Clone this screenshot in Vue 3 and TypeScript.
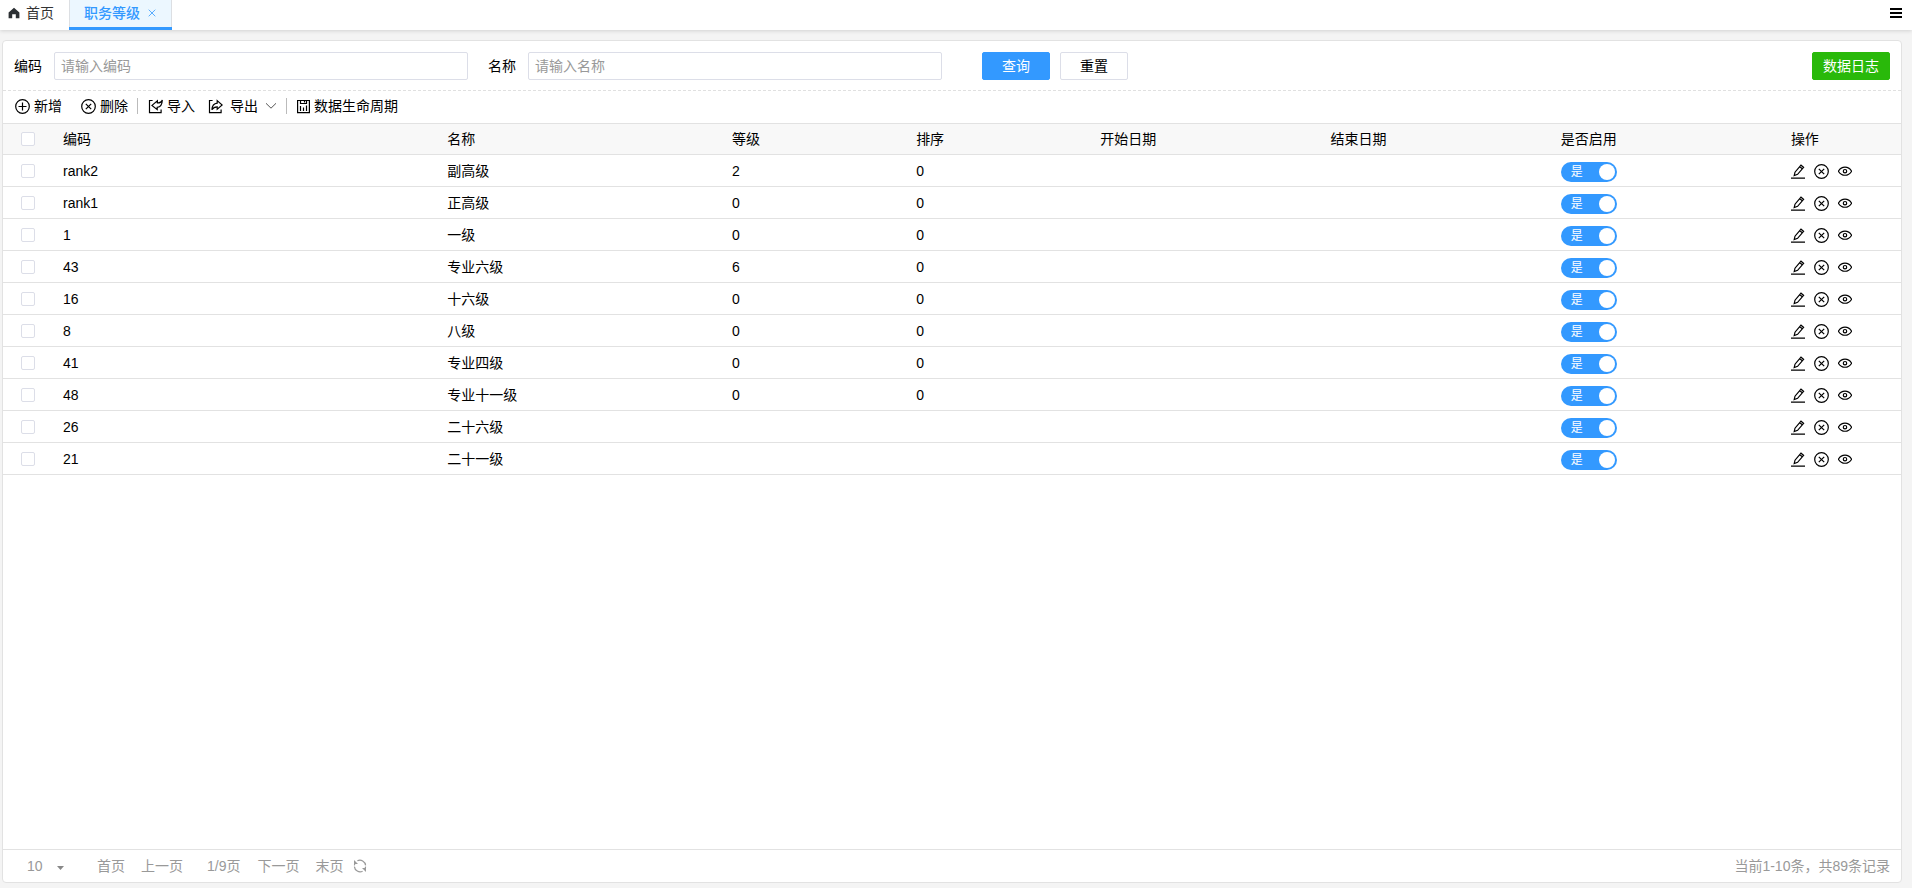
<script setup lang="ts">
import { computed, reactive, ref } from 'vue'

interface Rank {
  code: string
  name: string
  level: string
  sort: string
  start: string
  end: string
  enabled: boolean
  checked: boolean
}

const makeRank = (code: string, name: string, level = '', sort = ''): Rank => ({
  code, name, level, sort, start: '', end: '', enabled: true, checked: false,
})

const rows = reactive<Rank[]>([
  makeRank('rank2', '副高级', '2', '0'),
  makeRank('rank1', '正高级', '0', '0'),
  makeRank('1', '一级', '0', '0'),
  makeRank('43', '专业六级', '6', '0'),
  makeRank('16', '十六级', '0', '0'),
  makeRank('8', '八级', '0', '0'),
  makeRank('41', '专业四级', '0', '0'),
  makeRank('48', '专业十一级', '0', '0'),
  makeRank('26', '二十六级'),
  makeRank('21', '二十一级'),
])

const code = ref('')
const name = ref('')
const pageSize = ref('10')

const allChecked = computed<boolean>({
  get: () => rows.every((r) => r.checked),
  set: (value) => rows.forEach((r) => { r.checked = value }),
})

function reset(): void {
  code.value = ''
  name.value = ''
}
</script>

<template>
  <div class="page">
    <header class="tabs">
      <nav class="tab-list">
        <a class="tab home" href="#home">
          <svg width="12" height="12" viewBox="0 0 12 12"><path d="M6 .8 11.4 5.6V11.3H7.8V7.2H4.2V11.3H.6V5.6Z" fill="#2b2f33" /></svg>
          <span>首页</span>
        </a>
        <div class="tab active">
          <a href="#rank">职务等级</a>
          <button class="close" type="button" aria-label="关闭">
            <svg width="8" height="8" viewBox="0 0 8 8"><path d="M.7 .7 7.3 7.3M7.3 .7.7 7.3" stroke="currentColor" stroke-width=".8" fill="none" /></svg>
          </button>
        </div>
      </nav>
      <button class="menu" type="button" aria-label="菜单">
        <svg width="12" height="10" viewBox="0 0 12 10"><path d="M0 0h12v2H0zM0 4h12v2H0zM0 8h12v2H0z" fill="#000" /></svg>
      </button>
    </header>

    <main class="card">
      <form class="search" @submit.prevent>
        <div class="field">
          <label for="code">编码</label>
          <input id="code" v-model="code" type="text" placeholder="请输入编码" />
        </div>
        <div class="field">
          <label for="name">名称</label>
          <input id="name" v-model="name" type="text" placeholder="请输入名称" />
        </div>
        <div class="actions">
          <button class="btn primary" type="submit">查询</button>
          <button class="btn" type="button" @click="reset">重置</button>
        </div>
        <button class="btn log" type="button">数据日志</button>
      </form>

      <div class="toolbar">
        <button class="tool add" type="button">
          <svg width="15" height="15" viewBox="0 0 15 15"><circle cx="7.5" cy="7.5" r="6.8" /><path d="M7.5 3.5v8M3.5 7.5h8" /></svg>
          <span>新增</span>
        </button>
        <button class="tool" type="button">
          <svg width="15" height="15" viewBox="0 0 15 15"><circle cx="7.5" cy="7.5" r="6.8" /><path d="M4.8 4.8l5.4 5.4M10.2 4.8l-5.4 5.4" /></svg>
          <span>删除</span>
        </button>
        <i class="divider"></i>
        <button class="tool import" type="button">
          <svg width="15" height="15" viewBox="0 0 15 15"><path d="M4.6 1.5H1.5v12.2h11.6V10.6M14.3 1C13.8 2.9 12.2 3.9 9.4 4V1.8L4 6.4 9.2 10.6V8.3C12.4 8 14.2 5 14.3 1Z" /></svg>
          <span>导入</span>
        </button>
        <button class="tool export" type="button">
          <svg width="15" height="15" viewBox="0 0 15 15"><path d="M4.6 1.5H1.5v12.2h11.6V10.6M9.2 1.6 14.2 6 9.2 10.2V7.8C6.8 7.8 5.2 8.6 3.9 10.8 4.1 7.2 6 4.4 9.2 4.1Z" /></svg>
          <span>导出</span>
          <svg class="chevron" width="12" height="8" viewBox="0 0 12 8"><path d="M1 1.3 6 6.2 11 1.3" /></svg>
        </button>
        <i class="divider"></i>
        <button class="tool" type="button">
          <svg width="13" height="15" viewBox="0 0 13 15"><path d="M.6 1.5h11.8v12.2H.6ZM3.5 1.5v3h6v-3M7.5 1.5v2M3.5 7v5M6.5 8.5V12M9.5 6.5V12" /></svg>
          <span>数据生命周期</span>
        </button>
      </div>

      <div class="table-wrap">
        <table>
          <colgroup>
            <col class="c-check" />
            <col class="c-code" />
            <col class="c-name" />
            <col class="c-num" />
            <col class="c-num" />
            <col class="c-mid" />
            <col class="c-mid" />
            <col class="c-mid" />
            <col />
          </colgroup>
          <thead>
            <tr>
              <th class="check"><input v-model="allChecked" class="box" type="checkbox" aria-label="全选" /></th>
              <th>编码</th>
              <th>名称</th>
              <th>等级</th>
              <th>排序</th>
              <th>开始日期</th>
              <th>结束日期</th>
              <th>是否启用</th>
              <th>操作</th>
            </tr>
          </thead>
          <tbody>
            <tr v-for="row in rows" :key="row.code">
              <td class="check"><input v-model="row.checked" class="box" type="checkbox" :aria-label="'选择' + row.name" /></td>
              <td>{{ row.code }}</td>
              <td>{{ row.name }}</td>
              <td>{{ row.level }}</td>
              <td>{{ row.sort }}</td>
              <td>{{ row.start }}</td>
              <td>{{ row.end }}</td>
              <td>
                <label class="switch" :class="{ off: !row.enabled }">
                  <span>{{ row.enabled ? '是' : '否' }}</span>
                  <input v-model="row.enabled" type="checkbox" role="switch" />
                </label>
              </td>
              <td>
                <div class="ops">
                  <button type="button" aria-label="编辑">
                    <svg width="14" height="15" viewBox="0 0 14 15"><path d="M0 14.2h14M3.2 11.6 4 8.2 10 1.2 12.6 3.3 6.6 10.3ZM8.8 2.8 11.3 4.8" /></svg>
                  </button>
                  <button type="button" aria-label="删除">
                    <svg width="15" height="15" viewBox="0 0 15 15"><circle cx="7.5" cy="7.5" r="6.8" /><path d="M4.8 4.8l5.4 5.4M10.2 4.8l-5.4 5.4" /></svg>
                  </button>
                  <button type="button" aria-label="查看">
                    <svg width="14" height="15" viewBox="0 0 14 15"><path d="M.4 7.2C3.6 1.8 10.4 1.8 13.6 7.2 10.4 12.6 3.6 12.6.4 7.2Z" /><circle cx="7" cy="7.2" r="1.7" /></svg>
                  </button>
                </div>
              </td>
            </tr>
          </tbody>
        </table>
      </div>

      <footer class="pager">
        <div class="size">
          <select v-model="pageSize" aria-label="每页条数">
            <option>10</option>
            <option>20</option>
            <option>50</option>
          </select>
          <svg width="7" height="4" viewBox="0 0 7 4"><path d="M0 0h7L3.5 4Z" fill="#888" /></svg>
        </div>
        <button type="button">首页</button>
        <button type="button">上一页</button>
        <span class="current">1/9页</span>
        <button type="button">下一页</button>
        <button type="button">末页</button>
        <button class="refresh" type="button" aria-label="刷新">
          <svg width="14" height="14" viewBox="0 0 14 14"><path d="M4.4 1.8A5.7 5.7 0 0 1 12.6 6.4M9.6 12.2A5.7 5.7 0 0 1 1.4 7.6M1.4 6.4A5.7 5.7 0 0 1 2.6 3.2M12.6 7.6A5.7 5.7 0 0 1 11.4 10.8" fill="none" stroke="#999" stroke-width="1.2" /><path d="M1 1v4h4ZM13 13V9H9Z" fill="#999" /></svg>
        </button>
        <span class="total">当前1-10条，共89条记录</span>
      </footer>
    </main>
  </div>
</template>

<style>
body {
  margin: 0;
  background: #f4f4f4;
}
</style>

<style scoped>
.page,
.page * {
  box-sizing: border-box;
}

.page {
  display: flex;
  flex-direction: column;
  min-height: 100vh;
  font: 14px/20px "Liberation Sans", "Noto Sans CJK SC", sans-serif;
  color: #000;
}

button,
input,
select {
  font: inherit;
  color: inherit;
}

button {
  padding: 0;
  border: 0;
  background: none;
  cursor: pointer;
}

a {
  color: inherit;
  text-decoration: none;
}

svg {
  display: block;
  flex: none;
}

.tabs {
  display: flex;
  justify-content: space-between;
  height: 30px;
  background: #fff;
  box-shadow: 0 1px 4px rgba(0, 0, 0, 0.14);
}

.tab-list {
  display: flex;
}

.tab {
  display: flex;
  align-items: center;
  padding-bottom: 4px;
}

.home {
  gap: 6px;
  padding-left: 8px;
  padding-right: 15px;
  color: #333;
}

.active {
  gap: 8px;
  padding: 0 16px 1px 15px;
  border-bottom: 3px solid #39f;
  background: #ecf7ff;
  box-shadow: inset 1px 0 #dcdfe3, inset -1px 0 #dcdfe3;
  color: #39f;
  font-weight: 500;
}

.menu {
  padding: 0 10px 4px 0;
}

.card {
  display: flex;
  flex: 1;
  flex-direction: column;
  margin: 10px 10px 5px 2px;
  border: 1px solid #e2e2e2;
  border-radius: 4px;
  background: #fff;
}

.search {
  display: flex;
  align-items: center;
  gap: 20px;
  padding: 11px 11px 10px;
  border-bottom: 1px dashed #e0e0e0;
}

.field {
  display: flex;
  align-items: center;
  gap: 12px;
  width: 24.2%;
}

.field label {
  flex: none;
}

.field input {
  flex: 1;
  min-width: 0;
  height: 28px;
  padding: 0 6px;
  border: 1px solid #dcdee8;
  border-radius: 2px;
  background: #fff;
  outline: 0;
}

.field input::placeholder {
  color: #999;
}

.actions {
  display: flex;
  gap: 10px;
  margin-left: 20px;
}

.btn {
  height: 28px;
  padding: 0 19px;
  border: 1px solid #dcdee8;
  border-radius: 2px;
  background: #fff;
}

.primary {
  border-color: #39f;
  background: #39f;
  color: #fff;
}

.log {
  margin-left: auto;
  padding: 0 10px;
  border-color: #29b90a;
  background: #29b90a;
  color: #fff;
}

.toolbar {
  display: flex;
  align-items: center;
  height: 32px;
  padding: 0 12px 2px;
}

.tool {
  display: flex;
  align-items: center;
  gap: 4px;
}

.tool svg,
.ops svg {
  fill: none;
  stroke: #000;
  stroke-width: 1.2;
}

.add {
  margin-right: 19px;
}

.export {
  gap: 7px;
  margin-left: 13px;
}

.tool .chevron {
  stroke: #555;
  stroke-width: 1;
}

.divider {
  width: 1px;
  height: 16px;
  margin: 0 10px 0 9px;
  background: #bbb;
}

.table-wrap {
  flex: 1;
}

table {
  width: 100%;
  border-collapse: separate;
  border-spacing: 0;
  table-layout: fixed;
}

.c-check { width: 50px; }
.c-code { width: 20.25%; }
.c-name { width: 15%; }
.c-num { width: 9.7%; }
.c-mid { width: 12.13%; }

th,
td {
  height: 32px;
  padding: 0 10px;
  border-bottom: 1px solid #e2e2e2;
  text-align: left;
  font-weight: 400;
  vertical-align: middle;
}

th {
  border-top: 1px solid #e2e2e2;
  background: #f8f8f8;
}

.check {
  padding: 0 18px;
}

.box {
  display: block;
  width: 14px;
  height: 14px;
  margin: 0;
  border: 1px solid #dcdee8;
  border-radius: 2px;
  appearance: none;
  background: #fff;
}

.box:checked {
  border-color: #39f;
  background: #39f;
}

.switch {
  display: flex;
  align-items: center;
  justify-content: space-between;
  width: 56px;
  height: 20px;
  margin-top: 2px;
  padding: 0 2px 0 10px;
  border-radius: 10px;
  background: #39f;
  color: #fff;
  font-size: 12px;
}

.switch.off {
  background: #bbb;
}

.switch input {
  width: 16px;
  height: 16px;
  margin: 0;
  border-radius: 50%;
  appearance: none;
  background: #fff;
}

.ops {
  display: flex;
  gap: 9px;
  padding-top: 1px;
}

.pager {
  display: flex;
  align-items: center;
  height: 33px;
  padding: 0 11px 0 24px;
  border-top: 1px solid #e2e2e2;
  color: #999;
}

.size {
  display: flex;
  align-items: center;
  margin-right: 33px;
}

.size select {
  width: 30px;
  padding: 0;
  border: 0;
  appearance: none;
  background: none;
}

.size svg {
  margin-top: 4px;
}

.pager button + button {
  margin-left: 16px;
}

.current {
  margin: 0 17px 0 24px;
}

.pager .refresh {
  margin-left: 10px;
}

.total {
  margin-left: auto;
}
</style>
